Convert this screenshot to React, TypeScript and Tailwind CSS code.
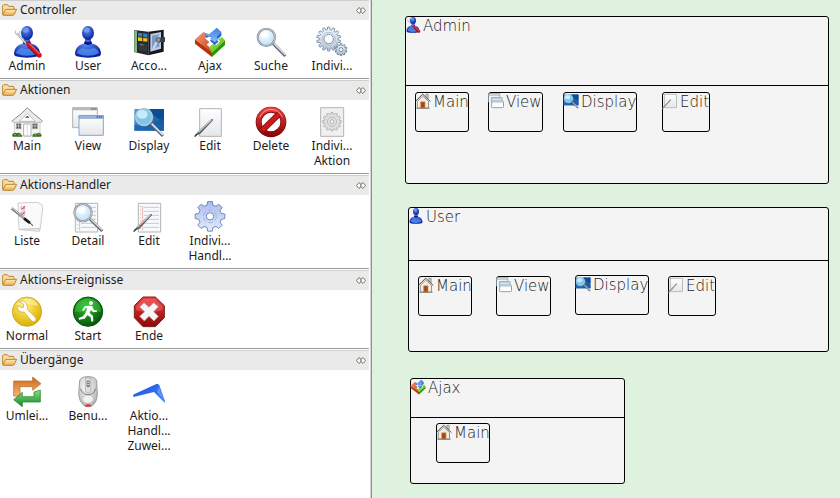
import React from "react";

type IconProps = { className?: string };

/** Shared gradients, referenced by every drawing on the page. */
function Gradients() {
  const linear: [string, string, string, boolean?][] = [
    ["gWhite", "#ffffff", "#e4e6ea"],
    ["gRed", "#ec3a3a", "#8d0808"],
    ["gBlueScreen", "#4aa6e0", "#0a3f86", true],
    ["gOrange", "#c9681a", "#fcb56a"],
    ["gGreenArrow", "#8ade86", "#128a22"],
    ["gBoomerang", "#2450dc", "#3f82fa", true],
    ["gFolder", "#fdeebb", "#eaae4e"],
    ["gGear", "#f4f8fc", "#b9c6d6"],
    ["gGearBlue", "#a9bbea", "#e4ebfc"],
    ["gAjaxRed", "#f7a080", "#c93c10", true],
    ["gAjaxBlue", "#3f7fe0", "#8cc0fa"],
    ["gAjaxGreen", "#b6f266", "#33b000", true],
  ];
  const radial: [string, string, string][] = [
    ["gUser", "#5d8cf0", "#0a1f9c"],
    ["gLens", "#ffffff", "#b4dcf8"],
    ["gYellow", "#fff27a", "#dcae00"],
    ["gGreen", "#2cc22c", "#06560a"],
    ["gMouse", "#ffffff", "#b4b4b4"],
  ];
  return (
    <svg className="absolute size-0" aria-hidden="true">
      <defs>
        {linear.map(([id, a, b, diag]) => (
          <linearGradient key={id} id={id} x1="0" y1="0" x2={diag ? "1" : "0"} y2="1">
            <stop offset="0" stopColor={a} />
            <stop offset="1" stopColor={b} />
          </linearGradient>
        ))}
        {radial.map(([id, a, b]) => (
          <radialGradient key={id} id={id} cx="0.42" cy="0.32" r="0.68">
            <stop offset="0" stopColor={a} />
            <stop offset="1" stopColor={b} />
          </radialGradient>
        ))}
      </defs>
    </svg>
  );
}

function Svg({ className, children }: IconProps & { children: React.ReactNode }) {
  return (
    <svg viewBox="0 0 96 96" className={className} aria-hidden="true">
      {children}
    </svg>
  );
}

function gearPath(cx: number, cy: number, outer: number, inner: number, teeth: number, hole: number) {
  const step = (Math.PI * 2) / teeth;
  const at = (r: number, a: number) => `${(cx + r * Math.cos(a)).toFixed(1)} ${(cy + r * Math.sin(a)).toFixed(1)}`;
  let d = "";
  for (let i = 0; i < teeth; i++) {
    const a = i * step - Math.PI / 2;
    d += `${i ? "L" : "M"}${at(inner, a - step * 0.32)}L${at(outer, a - step * 0.2)}L${at(outer, a + step * 0.2)}L${at(inner, a + step * 0.32)}`;
  }
  return `${d}ZM${cx - hole} ${cy}a${hole} ${hole} 0 1 0 ${hole * 2} 0a${hole} ${hole} 0 1 0 ${-hole * 2} 0Z`;
}

function Person() {
  return (
    <>
      <path
        d="M39 36 Q41 49 34 53 Q14 58 10 76 Q7 88 14 91 Q48 99 82 91 Q89 88 86 76 Q82 58 62 53 Q55 49 57 36Z"
        fill="url(#gUser)"
      />
      <path d="M15 82 Q17 68 34 66 Q48 74 63 66 Q79 68 81 82 Q48 97 15 82Z" fill="#4f93f4" opacity="0.75" />
      <ellipse cx="48" cy="21" rx="18" ry="21" fill="url(#gUser)" />
      <ellipse cx="44" cy="12" rx="10" ry="8" fill="#9cbcff" opacity="0.45" />
      <path d="M36 52 Q48 62 60 52 L57 45 Q48 51 39 45Z" fill="#06168a" />
    </>
  );
}

const UserIcon = (p: IconProps) => (
  <Svg {...p}>
    <Person />
  </Svg>
);

const AdminIcon = (p: IconProps) => (
  <Svg {...p}>
    <Person />
    <path d="M18 22 L48 56" stroke="#8b93a0" strokeWidth="6" />
    <path d="M18 22 L48 56" stroke="#f5f7fa" strokeWidth="3" />
    <path d="M14 13 L13 22 L19 27 L26 23 L26 15" fill="none" stroke="#c3c6cc" strokeWidth="4" />
    <path d="M46 50 Q53 45 59 52 L91 83 Q95 91 87 95 Q82 96 77 91 L50 63 Q43 57 46 50Z" fill="#d5121b" />
    <path d="M54 52 L86 84" stroke="#ff9090" strokeWidth="3" />
    <path d="M52 63 L80 91" stroke="#8c0009" strokeWidth="3" />
  </Svg>
);

const WalletIcon = (p: IconProps) => (
  <Svg {...p}>
    <path d="M3 12 L46 17 V88 L3 78Z" fill="#24272b" />
    <path d="M4 13 L12 15 V79 L4 77Z" fill="#a5cf9c" />
    <path d="M9 16 V77" stroke="#4c8a50" strokeWidth="2" />
    <path d="M15 20 L43 23 V36 L15 33Z" fill="#2d7fd6" />
    <path d="M15 32 L43 35 V47 L15 44Z" fill="#f3c51c" />
    <path d="M15 32 L43 36 M29 22 V46" stroke="#3b2f10" strokeWidth="3" />
    <path d="M16 50 L42 53 V78 L16 73Z" fill="#34373c" />
    <path d="M21 55 L32 57" stroke="#9aa0a8" strokeWidth="2" />
    <path d="M46 17 L92 11 V77 L46 88Z" fill="#15171a" />
    <path d="M52 24 L84 18 V68 L52 77Z" fill="#b9cbe4" />
    <path d="M57 29 L79 25 V62 L57 68Z" fill="#7d9ac6" />
    <path d="M57 68 L79 25 V40 L66 66Z" fill="#dbe7f6" opacity="0.8" />
    <path d="M76 36 L96 33 V48 L76 49Z" fill="#3a3d42" />
    <circle cx="76" cy="42" r="7" fill="#8f959d" stroke="#3a3d42" strokeWidth="2" />
  </Svg>
);

const AjaxIcon = (p: IconProps) => (
  <Svg {...p}>
    <path d="M3 40 L54 78 V93 L3 53Z" fill="#b5320c" />
    <path d="M3 40 L29 17 L41 29 L33 37 L46 48 L38 56 L54 70 L53 79Z" fill="url(#gAjaxRed)" />
    <path d="M53 80 L93 43 V57 L54 93Z" fill="#2d9700" />
    <path d="M53 80 L45 64 L56 54 L68 57 L78 46 L72 40 L84 33 L93 43Z" fill="url(#gAjaxGreen)" />
    <path d="M32 22 L45 29 L68 6 L82 19 V29 L69 41 L73 47 L62 57 L48 44 L55 37 L47 31 L37 36Z" fill="#2d63c6" />
    <path d="M32 20 L45 25 L68 6 L82 18 L68 32 L72 40 L62 49 L48 38 L54 33 L46 28 L37 31Z" fill="url(#gAjaxBlue)" />
  </Svg>
);

function Lens({ cx = 34, cy = 34 }: { cx?: number; cy?: number }) {
  return (
    <>
      <path d={`M${cx + 21} ${cy + 19} L91 90`} stroke="#5f6268" strokeWidth="9" strokeLinecap="butt" />
      <path d={`M${cx + 23} ${cy + 19} L91 87`} stroke="#d9dadd" strokeWidth="5" />
      <circle cx={cx} cy={cy} r="26" fill="url(#gLens)" fillOpacity="0.92" stroke="#7d828a" strokeWidth="6" />
      <circle cx={cx} cy={cy} r="26" fill="none" stroke="#eceef1" strokeWidth="2" />
      <ellipse cx={cx - 5} cy={cy - 7} rx="13" ry="10" fill="#ffffff" opacity="0.7" />
    </>
  );
}

const SearchIcon = (p: IconProps) => (
  <Svg {...p}>
    <Lens />
  </Svg>
);

const GearsIcon = (p: IconProps) => (
  <Svg {...p}>
    <path d={gearPath(38, 39, 36, 28, 14, 14)} fill="url(#gGear)" stroke="#8297ad" strokeWidth="3" fillRule="evenodd" />
    <circle cx="38" cy="39" r="20" fill="none" stroke="#b4c3d3" strokeWidth="3" />
    <path d={gearPath(75, 71, 18, 13, 10, 6)} fill="url(#gGear)" stroke="#6f8398" strokeWidth="3" fillRule="evenodd" />
  </Svg>
);

const HouseIcon = (p: IconProps) => (
  <Svg {...p}>
    <path d="M10 46 H87 V90 H10Z" fill="#f4f4f4" stroke="#b9b9b9" strokeWidth="2" />
    <path d="M1 48 L14 36 L30 24 L49 5 L68 24 L84 36 L97 48Z" fill="#ececec" />
    <path d="M1 47 L14 36 L30 24 L49 5 L68 24 L84 36 L96 47" fill="none" stroke="#8a8a8a" strokeWidth="3" />
    <path d="M25 46 L49 22 L73 46Z" fill="#fdfdfd" stroke="#a5a5a5" strokeWidth="2" />
    <path d="M43 35 Q49 25 55 35Z" fill="#3d4638" />
    <path d="M6 49 H92" stroke="#9d9d9d" strokeWidth="2" />
    <path d="M16 53 H30 V68 H16Z M65 53 H79 V68 H65Z" fill="#435039" stroke="#a5a5a5" strokeWidth="2" />
    <path d="M23 53 V68 M16 60 H30 M72 53 V68 M65 60 H79" stroke="#e5e5e5" strokeWidth="2" />
    <path d="M38 54 H60 V90 H38Z" fill="#ffffff" stroke="#b0b0b0" strokeWidth="3" />
    <path d="M49 54 V90" stroke="#c9c9c9" strokeWidth="2" />
    <path d="M3 86 Q10 77 18 82 Q27 77 33 89 L33 92 H5Z M64 92 Q65 80 76 83 Q88 76 92 88 L90 92Z" fill="#3d6f22" />
    <path d="M9 86 H15 M22 87 H27 M71 87 H76 M81 85 H86" stroke="#8cb85e" strokeWidth="3" />
  </Svg>
);

const WindowsIcon = (p: IconProps) => (
  <Svg {...p}>
    <path d="M2 5 H76 V65 H2Z" fill="url(#gWhite)" stroke="#b0b0b0" strokeWidth="3" />
    <path d="M2 5 H76 V13 H2Z" fill="#b9b9b9" />
    <path d="M58 9 H73" stroke="#6d6d6d" strokeWidth="4" strokeDasharray="4 2" />
    <path d="M21 29 H94 V88 H21Z" fill="url(#gWhite)" stroke="#8ba4d0" strokeWidth="3" />
    <path d="M21 29 H94 V37 H21Z" fill="#9fb9e6" stroke="#7590c0" strokeWidth="2" />
    <path d="M74 33 H91" stroke="#3c62a8" strokeWidth="4" strokeDasharray="4 2" />
  </Svg>
);

const DisplayIcon = (p: IconProps) => (
  <Svg {...p}>
    <path d="M4 9 H93 V74 H4Z" fill="url(#gBlueScreen)" />
    <path d="M50 9 Q62 40 93 42 V9Z" fill="#0c4c94" />
    <path d="M4 56 Q45 70 93 48 V74 H4Z" fill="#1b67b4" opacity="0.75" />
    <path d="M54 53 L90 90" stroke="#5f6268" strokeWidth="9" />
    <path d="M56 53 L90 87" stroke="#e5e6e8" strokeWidth="5" />
    <circle cx="33" cy="33" r="25" fill="#7cc6ee" stroke="#b7c6d2" strokeWidth="5" />
    <ellipse cx="28" cy="25" rx="16" ry="13" fill="#d9f3ff" opacity="0.8" />
  </Svg>
);

function Pen() {
  return (
    <>
      <path d="M2 91 L13 76 L50 41 Q57 36 57 43 L19 83Z" fill="#5c5e62" />
      <path d="M13 79 L52 42" stroke="#c8c9cc" strokeWidth="4" />
      <path d="M2 92 L9 84" stroke="#333333" strokeWidth="4" />
    </>
  );
}

const EditPageIcon = (p: IconProps) => (
  <Svg {...p}>
    <path d="M17 8 H82 V91 H17Z" fill="url(#gWhite)" stroke="#b4b4b4" strokeWidth="3" />
    <Pen />
  </Svg>
);

const DeleteIcon = (p: IconProps) => (
  <Svg {...p}>
    <circle cx="48" cy="48" r="37" fill="none" stroke="#7e0a0a" strokeWidth="18" />
    <circle cx="48" cy="47" r="37" fill="none" stroke="url(#gRed)" strokeWidth="14" />
    <path d="M22 73 L73 23" stroke="#7e0a0a" strokeWidth="18" />
    <path d="M22 73 L73 23" stroke="#c91b1b" strokeWidth="13" />
    <path d="M14 34 Q24 11 48 10 Q71 11 81 32" fill="none" stroke="#ff9c9c" strokeWidth="3" />
  </Svg>
);

const GearPageIcon = (p: IconProps) => (
  <Svg {...p}>
    <path d="M14 5 H83 V91 H14Z" fill="#f0f0f0" stroke="#b4b4b4" strokeWidth="3" />
    <path d={gearPath(48, 47, 28, 23, 12, 6)} fill="#e0e0e0" stroke="#9b9b9b" strokeWidth="2" fillRule="evenodd" />
    <circle cx="48" cy="47" r="14" fill="none" stroke="#bcbcbc" strokeWidth="3" />
  </Svg>
);

const ListIcon = (p: IconProps) => (
  <Svg {...p}>
    <path d="M24 12 L88 17 L86 91 L27 86Z" fill="#e8e8e8" stroke="#bcbcbc" strokeWidth="2" />
    <path d="M21 6 L80 4 L96 14 L88 82 L24 85Z" fill="#fafafa" stroke="#b6b6b6" strokeWidth="2" />
    <path d="M30 17 H41 V27 H30Z M30 33 H41 V43 H30Z" fill="#ffe9e9" stroke="#a9a9b4" strokeWidth="2" />
    <path d="M32 21 L35 24 L41 16 M32 37 L35 40 L41 32" fill="none" stroke="#d3263a" strokeWidth="3" />
    <path d="M2 22 L32 46" stroke="#77797d" strokeWidth="8" />
    <path d="M2 20 L34 46" stroke="#e5e5e5" strokeWidth="3" />
    <path d="M26 42 L55 65" stroke="#9fa1a5" strokeWidth="7" />
    <path d="M39 52 L57 66" stroke="#161616" strokeWidth="8" />
    <path d="M56 65 L66 74" stroke="#333333" strokeWidth="3" />
  </Svg>
);

function LinedPage({ x }: { x: number }) {
  return (
    <>
      <path d={`M${x} 7 h67 v86 h-67Z`} fill="#f8f9fb" stroke="#b4b4b4" strokeWidth="3" />
      <path
        d={`M${x + 17} 19 h45 M${x + 17} 31 h45 M${x + 17} 43 h45 M${x + 17} 55 h45 M${x + 17} 67 h45 M${x + 17} 79 h45`}
        stroke="#b7cdf0"
        strokeWidth="3"
      />
      <path d={`M${x + 13} 15 v73`} stroke="#f5b0b0" strokeWidth="3" />
      <path d={`M${x + 7} 15 v72`} stroke="#b8b8b8" strokeWidth="3" strokeDasharray="3 8" />
    </>
  );
}

const DetailIcon = (p: IconProps) => (
  <Svg {...p}>
    <LinedPage x={10} />
    <Lens cx={33} cy={35} />
  </Svg>
);

const EditLinesIcon = (p: IconProps) => (
  <Svg {...p}>
    <LinedPage x={16} />
    <Pen />
  </Svg>
);

const GearIcon = (p: IconProps) => (
  <Svg {...p}>
    <path d={gearPath(48, 46, 45, 35, 8, 11)} fill="url(#gGearBlue)" stroke="#6f89c2" strokeWidth="3" strokeLinejoin="round" fillRule="evenodd" />
    <circle cx="48" cy="46" r="19" fill="none" stroke="#9fb2e2" strokeWidth="3" strokeDasharray="14 6" />
  </Svg>
);

const WrenchIcon = (p: IconProps) => (
  <Svg {...p}>
    <circle cx="48" cy="47" r="44" fill="url(#gYellow)" stroke="#c39a14" strokeWidth="2" />
    <path d="M15 30 Q26 7 49 7 Q72 8 82 30 Q50 20 15 30Z" fill="#fffbd0" opacity="0.5" />
    <path
      d="M25 17 L38 25 L38 34 L29 34 L20 28 Q17 43 31 48 L39 48 L63 76 Q69 80 74 74 Q78 68 72 63 L49 40 Q51 19 34 14Z"
      fill="#ffffff"
      stroke="#c9a51d"
      strokeWidth="2"
    />
  </Svg>
);

const RunIcon = (p: IconProps) => (
  <Svg {...p}>
    <circle cx="48" cy="47" r="44" fill="url(#gGreen)" stroke="#075010" strokeWidth="3" />
    <path d="M9 47 Q10 11 48 8 Q86 11 87 47Z" fill="#55d355" opacity="0.4" />
    <circle cx="57" cy="21" r="6" fill="#ffffff" />
    <path
      d="M54 29 L39 30 L30 42 L34 45 L42 36 L46 37 L40 51 L33 61 L20 66 L21 71 L38 68 L46 58 L56 64 L58 77 L64 76 L63 60 L53 50 L57 41 L63 49 L75 47 L74 43 L66 43 L61 31Z"
      fill="#ffffff"
    />
  </Svg>
);

const StopIcon = (p: IconProps) => (
  <Svg {...p}>
    <path d="M30 3 H67 L94 29 V65 L67 92 H30 L4 65 V29Z" fill="url(#gRed)" stroke="#7f2020" strokeWidth="3" />
    <path d="M31 8 H65 L89 31 V43 Q48 52 9 43 V31Z" fill="#ff8a8a" opacity="0.35" />
    <path
      d="M33 20 L48 34 L62 20 L76 32 L62 47 L76 61 L63 75 L48 61 L34 75 L20 61 L35 47 L20 33Z"
      fill="#f6f6f6"
      stroke="#b9a0a0"
      strokeWidth="2"
    />
  </Svg>
);

const RedirectIcon = (p: IconProps) => (
  <Svg {...p}>
    <path d="M8 15 H65 V3 L90 23 L65 43 V32 H27 V60 H8Z" fill="url(#gOrange)" stroke="#b5651c" strokeWidth="2" />
    <path d="M88 42 V78 H34 V92 L8 71 L34 49 V62 H69 V48Z" fill="url(#gGreenArrow)" stroke="#187a28" strokeWidth="2" />
  </Svg>
);

const MouseIcon = (p: IconProps) => (
  <Svg {...p}>
    <path d="M23 15 Q25 2 48 2 Q71 2 74 15 L76 55 Q75 78 61 89 Q48 96 36 89 Q22 78 20 55Z" fill="url(#gMouse)" stroke="#9c9c9c" strokeWidth="3" />
    <path d="M25 38 Q30 52 38 54 Q48 59 59 54 Q67 52 71 38" fill="none" stroke="#7d7d7d" strokeWidth="3" />
    <path d="M41 5 Q38 23 41 48 Q48 55 56 48 Q59 23 55 5Z" fill="#dedede" stroke="#a5a5a5" strokeWidth="2" />
    <path d="M44 14 H53 V33 H44Z" fill="#777777" />
    <path d="M46 19 H51 M46 26 H51" stroke="#eeeeee" strokeWidth="3" />
    <path d="M39 88 L45 85 H52 L58 88 L55 92 H42Z" fill="#ec3535" />
    <ellipse cx="48" cy="70" rx="15" ry="10" fill="#ffffff" opacity="0.75" />
  </Svg>
);

const BoomerangIcon = (p: IconProps) => (
  <Svg {...p}>
    <path d="M0 56 L70 24 Q75 22 79 28 L96 76 L95 80 L63 48 L2 63Z" fill="url(#gBoomerang)" />
    <path d="M78 32 L93 74 L72 48Z" fill="#5b98ff" />
  </Svg>
);

/** Small house used on the canvas nodes. */
const HomeNodeIcon = (p: IconProps) => (
  <Svg {...p}>
    <path d="M14 50 L46 19 L81 50 V91 H14Z" fill="#f2eee4" stroke="#85817a" strokeWidth="5" />
    <path d="M65 8 H79 V34 L65 23Z" fill="#d8d3c5" stroke="#77756c" strokeWidth="4" />
    <path d="M2 51 L46 7 L92 51" fill="none" stroke="#4b4a46" strokeWidth="6" />
    <path d="M34 53 H60 V90 H34Z" fill="#a64a12" stroke="#d98a4c" strokeWidth="4" />
    <path d="M8 91 H88" stroke="#77736b" strokeWidth="5" />
  </Svg>
);

const ViewNodeIcon = (p: IconProps) => (
  <Svg {...p}>
    <path d="M2 56 V5 H70 V22" fill="none" stroke="#86a3ba" strokeWidth="6" />
    <path d="M4 14 H68" stroke="#b9ccda" strokeWidth="7" />
    <path d="M22 62 V28 H84 V44" fill="none" stroke="#86a3ba" strokeWidth="6" />
    <path d="M23 35 H82" stroke="#b9ccda" strokeWidth="7" />
    <rect x="22" y="48" width="71" height="40" rx="5" fill="#ffffff" stroke="#86a3ba" strokeWidth="6" />
    <path d="M24 55 H90" stroke="#a9c2d5" strokeWidth="5" />
  </Svg>
);

const EditNodeIcon = (p: IconProps) => (
  <Svg {...p}>
    <path d="M14 8 H87 V88 H14Z" fill="url(#gWhite)" stroke="#bcbcbc" strokeWidth="6" />
    <path d="M3 93 L53 40" stroke="#8d8d8d" strokeWidth="7" />
  </Svg>
);

const FolderIcon = (p: IconProps) => (
  <svg viewBox="0 0 48 48" className={p.className} aria-hidden="true">
    <path d="M2 37 V11 L5 8 H16 L20 13 H34 L36 16 V22" fill="#f8dfa0" stroke="#bb842c" strokeWidth="3" />
    <path d="M2 39 L11 22 H44 L36 38 Q35 40 32 40 H5Z" fill="url(#gFolder)" stroke="#bb842c" strokeWidth="3" strokeLinejoin="round" />
  </svg>
);

const CollapseIcon = () => (
  <svg viewBox="0 0 10 7" className="mt-[6px] h-[7px] w-[10px]" fill="#fbfbf4" stroke="#77776c" strokeWidth="1" aria-hidden="true">
    <path d="M3 .5 L.5 3.5 L3 6.5 L5 4.7 V2.3Z" />
    <path d="M7 .5 L9.5 3.5 L7 6.5 L5 4.7 V2.3Z" />
  </svg>
);

type Tool = { lines: string[]; Icon: React.FC<IconProps> };

const sections: { title: string; tools: Tool[] }[] = [
  {
    title: "Controller",
    tools: [
      { lines: ["Admin"], Icon: AdminIcon },
      { lines: ["User"], Icon: UserIcon },
      { lines: ["Acco..."], Icon: WalletIcon },
      { lines: ["Ajax"], Icon: AjaxIcon },
      { lines: ["Suche"], Icon: SearchIcon },
      { lines: ["Indivi..."], Icon: GearsIcon },
    ],
  },
  {
    title: "Aktionen",
    tools: [
      { lines: ["Main"], Icon: HouseIcon },
      { lines: ["View"], Icon: WindowsIcon },
      { lines: ["Display"], Icon: DisplayIcon },
      { lines: ["Edit"], Icon: EditPageIcon },
      { lines: ["Delete"], Icon: DeleteIcon },
      { lines: ["Indivi...", "Aktion"], Icon: GearPageIcon },
    ],
  },
  {
    title: "Aktions-Handler",
    tools: [
      { lines: ["Liste"], Icon: ListIcon },
      { lines: ["Detail"], Icon: DetailIcon },
      { lines: ["Edit"], Icon: EditLinesIcon },
      { lines: ["Indivi...", "Handl..."], Icon: GearIcon },
    ],
  },
  {
    title: "Aktions-Ereignisse",
    tools: [
      { lines: ["Normal"], Icon: WrenchIcon },
      { lines: ["Start"], Icon: RunIcon },
      { lines: ["Ende"], Icon: StopIcon },
    ],
  },
  {
    title: "Übergänge",
    tools: [
      { lines: ["Umlei..."], Icon: RedirectIcon },
      { lines: ["Benu..."], Icon: MouseIcon },
      { lines: ["Aktio...", "Handl...", "Zuwei..."], Icon: BoomerangIcon },
    ],
  },
];

function PaletteSection({ title, tools, last }: { title: string; tools: Tool[]; last: boolean }) {
  return (
    <section className={last ? "" : "mb-px border-b border-[#9c9c9c]"}>
      <h2>
        <button
          type="button"
          aria-expanded="true"
          className="flex h-5 w-full items-start border-t border-[#cfcfcf] bg-[#eaeaea] pr-[3px] pl-0.5 text-left"
        >
          <FolderIcon className="mt-px size-4" />
          <span className="ml-0.5 flex-1 leading-[18px]">{title}</span>
          <CollapseIcon />
        </button>
      </h2>
      <div className="flex gap-[15px] pt-1.5 pb-[5px] pl-1">
        {tools.map(({ lines, Icon }) => (
          <button key={lines.join()} type="button" className="flex w-[46px] flex-col items-center leading-[15px]">
            <Icon className="size-8" />
            {lines.map((line) => (
              <span key={line} className="whitespace-nowrap">
                {line}
              </span>
            ))}
          </button>
        ))}
      </div>
    </section>
  );
}

/** Label row shared by controllers and the actions placed inside them. */
function NodeLabel({ Icon, children }: { Icon: React.FC<IconProps>; children: string }) {
  return (
    <div className="-ml-px flex items-start gap-0.5 leading-[18px] whitespace-nowrap">
      <Icon className="size-4 shrink-0" />
      <span>{children}</span>
    </div>
  );
}

const nodeKinds = {
  Main: { Icon: HomeNodeIcon, width: "w-[54px]" },
  View: { Icon: ViewNodeIcon, width: "w-[55px]" },
  Display: { Icon: DisplayIcon, width: "w-[74px]" },
  Edit: { Icon: EditNodeIcon, width: "w-12" },
};

function ActionNode({ kind, place }: { kind: keyof typeof nodeKinds; place: string }) {
  const { Icon, width } = nodeKinds[kind];
  return (
    <div className={`absolute h-10 rounded-[3px] border border-black ${width} ${place}`}>
      <NodeLabel Icon={Icon}>{kind}</NodeLabel>
    </div>
  );
}

function ControllerNode(props: {
  name: string;
  Icon: React.FC<IconProps>;
  place: string;
  head: string;
  children: React.ReactNode;
}) {
  return (
    <article className={`absolute rounded-[3px] border border-black bg-[#f4f4f4] ${props.place}`}>
      <header className={`border-b border-black ${props.head}`}>
        <NodeLabel Icon={props.Icon}>{props.name}</NodeLabel>
      </header>
      {props.children}
    </article>
  );
}

export default function App() {
  return (
    <div className="flex min-h-screen bg-white">
      <Gradients />
      <aside className="w-[372px] shrink-0 border-r border-[#8f8f8f] font-['Noto_Sans',sans-serif] text-xs text-[#1c1c1c]">
        <div className="h-full border-r border-[#d4d4d4] pr-px">
          {sections.map((s, i) => (
            <PaletteSection key={s.title} {...s} last={i === sections.length - 1} />
          ))}
        </div>
      </aside>
      <main className="relative flex-1 overflow-hidden bg-[#dff1df] font-['DejaVu_Sans',sans-serif] text-[15px] font-extralight text-[#181818]">
        <ControllerNode name="Admin" Icon={AdminIcon} place="left-[33px] top-4 h-[168px] w-[424px]" head="h-[69px]">
          <ActionNode kind="Main" place="left-[9px] top-[75px]" />
          <ActionNode kind="View" place="left-[82px] top-[75px]" />
          <ActionNode kind="Display" place="left-[157px] top-[75px]" />
          <ActionNode kind="Edit" place="left-64 top-[75px]" />
        </ControllerNode>
        <ControllerNode name="User" Icon={UserIcon} place="left-9 top-[207px] h-[145px] w-[421px]" head="h-[53px]">
          <ActionNode kind="Main" place="left-[9px] top-[68px]" />
          <ActionNode kind="View" place="left-[87px] top-[68px]" />
          <ActionNode kind="Display" place="left-[166px] top-[67px]" />
          <ActionNode kind="Edit" place="left-[259px] top-[68px]" />
        </ControllerNode>
        <ControllerNode name="Ajax" Icon={AjaxIcon} place="left-[38px] top-[378px] h-[106px] w-[215px]" head="h-[39px]">
          <ActionNode kind="Main" place="left-[25px] top-11" />
        </ControllerNode>
      </main>
    </div>
  );
}
